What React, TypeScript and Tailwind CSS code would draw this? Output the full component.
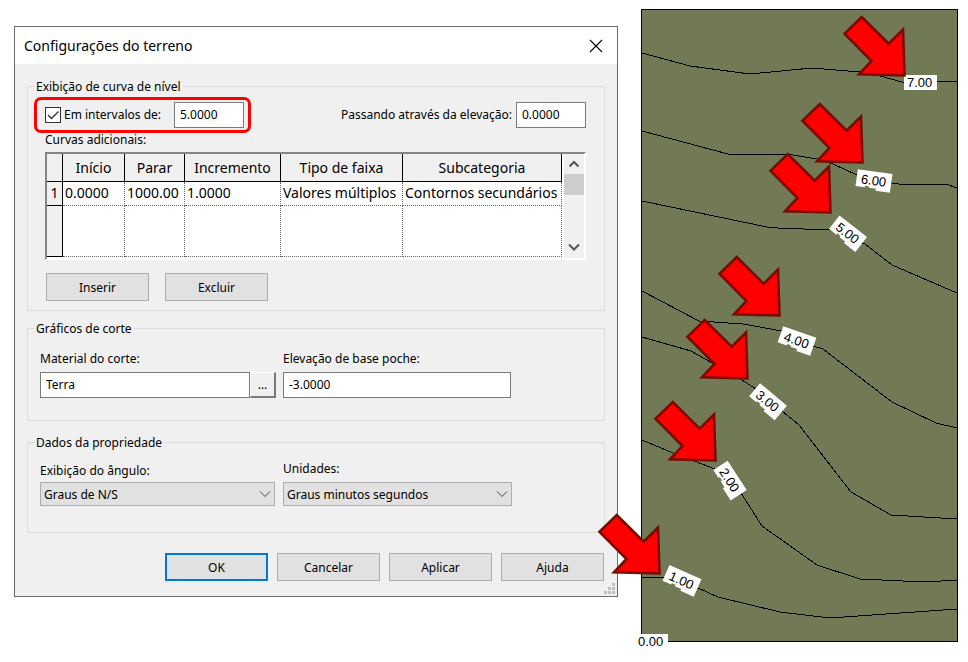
import type { ReactNode } from "react";

type LabelSpec = { text: string; x: number; y: number; angle: number };

const contours = [
  "642,53 690,66 750,74 812,68 860,72 880,76 902,82 937,82 957,81",
  "642,131 728,154 787,154 817,159 833,164 857,175 892,183 899,184 946,184 957,188",
  "642,201 767,227 778,228 830,230 865,244 892,265 957,293",
  "642,291 699,321 743,324 782,331 813,346 823,349 892,402 936,423 957,428",
  "642,337 691,351 712,363 742,380 756,389 782,411 799,425 851,492 891,515 957,519",
  "642,440 673,453 715,469 741,493 762,526 817,565 860,579 925,582 957,580",
  "642,577 665,577 698,588 718,597 780,612 830,618 957,609",
];

const labels: LabelSpec[] = [
  { text: "6.00", x: 874, y: 180, angle: 8 },
  { text: "5.00", x: 848, y: 233, angle: 38 },
  { text: "4.00", x: 797, y: 340, angle: 19 },
  { text: "3.00", x: 768, y: 401, angle: 40 },
  { text: "2.00", x: 730, y: 480, angle: 57 },
  { text: "1.00", x: 682, y: 580, angle: 24 },
];

const arrows = [
  [905, 76],
  [863, 163],
  [831, 213],
  [780, 316],
  [748, 379],
  [716, 461],
  [660, 574],
];

function TerrainMap() {
  return (
    <svg viewBox="641 9 317 634" className="block w-full overflow-visible" role="img" aria-label="Curvas de nível">
      <rect x="641.5" y="9.5" width="316" height="632" fill="#727a55" stroke="#000" shapeRendering="crispEdges" />
      {contours.map((points) => (
        <polyline key={points} points={points} fill="none" stroke="#000" shapeRendering="crispEdges" />
      ))}
      <g fontFamily="'Liberation Sans', Arial, sans-serif" fontSize="13">
        <rect x="904" y="75" width="33" height="15" fill="#fff" />
        <text x="907" y="87">7.00</text>
        <rect x="638" y="634" width="30" height="16" fill="#fff" />
        <text x="638" y="646">0.00</text>
        {labels.map((l) => (
          <g key={l.text} transform={`translate(${l.x} ${l.y}) rotate(${l.angle})`}>
            <path d="M-17.5 -8.5H17.5V10.5H3V8.5H-4V7H-8V8.5H-17.5Z" fill="#fff" />
            <text x="-13" y="5">{l.text}</text>
          </g>
        ))}
      </g>
      {arrows.map(([x, y]) => (
        <path
          key={y}
          transform={`translate(${x} ${y})`}
          d="M-43.3 -59L-16.3 -32.3L-2 -46.5L-0.5 -0.5L-46 -1.7L-33.5 -15L-60.5 -42.3Z"
          fill="#f00"
          stroke="#780c00"
          strokeWidth="2.6"
        />
      ))}
    </svg>
  );
}

function Group({ title, className, children }: { title: string; className: string; children: ReactNode }) {
  return (
    <fieldset className={`min-w-0 border border-[#dcdcdc] ${className}`}>
      <legend className="ml-1.5 px-0.5 pt-0.5 leading-4">{title}</legend>
      {children}
    </fieldset>
  );
}

function PushButton({ children, primary = false }: { children: ReactNode; primary?: boolean }) {
  return (
    <button
      type="button"
      className={`h-7 w-[103px] bg-[#e1e1e1] pt-0.5 text-center ${primary ? "border-2 border-[#0078d7]" : "border border-[#adadad]"}`}
    >
      {children}
    </button>
  );
}

function Chevron({ className, up = false, width = 1 }: { className: string; up?: boolean; width?: number }) {
  return (
    <svg viewBox="0 0 12 8" className={className} fill="none" stroke="currentColor" strokeWidth={width} aria-hidden="true">
      <path d={up ? "M1.5 6.5L6 2L10.5 6.5" : "M1 1.5L6 6.5L11 1.5"} />
    </svg>
  );
}

function Dropdown({ id, value }: { id: string; value: string }) {
  return (
    <div className="relative">
      <select id={id} className="block h-6 w-full appearance-none border border-[#adadad] bg-[#e1e1e1] pt-0.5 pl-[3px]">
        <option>{value}</option>
      </select>
      <Chevron className="pointer-events-none absolute top-2 right-1 h-2 w-3 text-[#444]" />
    </div>
  );
}

const field = "h-[26px] border border-[#7a7a7a] bg-white px-[5px] pb-0.5";
const cell = "border-r border-b border-dotted border-[#666] p-0 pl-0.5 pb-0.5";
const head = "border-r border-b border-black bg-[#f0f0f0] p-0 font-normal";
const rowHead = "border-r border-b border-black bg-[#f0f0f0] p-0 pb-0.5 font-normal";

function CurvesTable() {
  return (
    <div className="flex h-[108px] border-2 border-t-[#848484] border-r-white border-b-white border-l-[#848484] bg-white">
      <div className="min-w-0 flex-1">
        <table className="h-[103px] w-full table-fixed border-separate border-spacing-0 text-left text-[14px] leading-5 whitespace-nowrap">
          <colgroup>
            <col className="w-4" />
            <col className="w-[62px]" />
            <col className="w-[60px]" />
            <col className="w-24" />
            <col className="w-[122px]" />
            <col />
          </colgroup>
          <thead>
            <tr className="h-7 text-center">
              <td className={head}></td>
              <th scope="col" className={head}>Início</th>
              <th scope="col" className={head}>Parar</th>
              <th scope="col" className={head}>Incremento</th>
              <th scope="col" className={head}>Tipo de faixa</th>
              <th scope="col" className={head}>Subcategoria</th>
            </tr>
          </thead>
          <tbody>
            <tr className="h-6">
              <th scope="row" className={`${rowHead} text-center`}>1</th>
              <td className={cell}>0.0000</td>
              <td className={cell}>1000.00</td>
              <td className={cell}>1.0000</td>
              <td className={cell}>Valores múltiplos</td>
              <td className={cell}>Contornos secundários</td>
            </tr>
            <tr>
              <td className={rowHead}></td>
              <td className={cell}></td>
              <td className={cell}></td>
              <td className={cell}></td>
              <td className={cell}></td>
              <td className={cell}></td>
            </tr>
          </tbody>
        </table>
      </div>
      <div className="ml-0.5 flex w-5 flex-col items-center justify-between bg-[#f0f0f0] pt-1.5 pb-[7px] text-[#555]">
        <div className="flex w-full flex-col items-center gap-1.5">
          <Chevron up width={2} className="h-2 w-3" />
          <div className="h-[21px] w-full bg-[#cdcdcd]"></div>
        </div>
        <Chevron width={2} className="h-2 w-3" />
      </div>
    </div>
  );
}

function TerrainDialog() {
  return (
    <section className="mt-[17px] border border-[#6d6d6d] bg-[#f0f0f0] font-['Noto_Sans',sans-serif] text-[12px] leading-4 text-black">
      <header className="flex h-[37px] items-center justify-between bg-white pr-3.5 pl-[9px]">
        <h1 className="text-[14px] leading-5">Configurações do terreno</h1>
        <button type="button" aria-label="Fechar" className="p-0">
          <svg viewBox="0 0 14 14" className="block size-3.5" stroke="#000" strokeWidth="1.1" aria-hidden="true">
            <path d="M1 1L13 13M13 1L1 13" />
          </svg>
        </button>
      </header>

      <form className="px-3 pt-[13px]">
        <Group title="Exibição de curva de nível" className="h-[234px]">
          <div className="mt-0.5 flex items-center justify-between pr-[18px] pl-1.5">
            <div className="flex h-9 w-[217px] items-center justify-between rounded-[7px] border-3 border-[#f00] pr-1 pl-2">
              <label className="flex items-center gap-[3px]">
                <span className="grid">
                  <input
                    type="checkbox"
                    defaultChecked
                    className="peer col-start-1 row-start-1 size-4 appearance-none border border-[#333] bg-white"
                  />
                  <svg
                    viewBox="0 0 16 16"
                    className="pointer-events-none col-start-1 row-start-1 hidden size-4 peer-checked:block"
                    fill="none"
                    stroke="#333"
                    strokeWidth="1.4"
                    aria-hidden="true"
                  >
                    <path d="M3 8L6.5 11.5L13.5 4.5" />
                  </svg>
                </span>
                Em intervalos de:
              </label>
              <input aria-label="Intervalo" defaultValue="5.0000" className={`w-[70px] ${field}`} />
            </div>
            <div className="flex items-center gap-1">
              <label htmlFor="elevation">Passando através da elevação:</label>
              <input id="elevation" defaultValue="0.0000" className={`w-[70px] ${field}`} />
            </div>
          </div>
          <div className="pr-[18px] pl-[17px]">
            <p className="mb-[5px] leading-[14px]">Curvas adicionais:</p>
            <CurvesTable />
            <div className="mt-[13px] ml-px flex gap-4">
              <PushButton>Inserir</PushButton>
              <PushButton>Excluir</PushButton>
            </div>
          </div>
        </Group>

        <Group title="Gráficos de corte" className="mt-2 h-[102px]">
          <div className="mt-3.5 flex gap-[7px] pl-3">
            <div className="w-[236px]">
              <label htmlFor="material" className="mb-[5px] block">Material do corte:</label>
              <div className="flex">
                <input id="material" defaultValue="Terra" className={`min-w-0 flex-1 ${field}`} />
                <button
                  type="button"
                  className="h-[26px] w-[26px] border-t border-r-2 border-b-2 border-l border-t-white border-r-[#7a7a7a] border-b-[#7a7a7a] border-l-white bg-[#f0f0f0]"
                >
                  ...
                </button>
              </div>
            </div>
            <div className="w-[228px]">
              <label htmlFor="base" className="mb-[5px] block">Elevação de base poche:</label>
              <input id="base" defaultValue="-3.0000" className={`w-full ${field}`} />
            </div>
          </div>
        </Group>

        <Group title="Dados da propriedade" className="mt-3 h-[100px]">
          <div className="mt-2.5 flex items-end gap-2 pl-3">
            <div className="w-[235px]">
              <label htmlFor="angle" className="mb-[3px] block">Exibição do ângulo:</label>
              <Dropdown id="angle" value="Graus de N/S" />
            </div>
            <div className="w-[229px]">
              <label htmlFor="units" className="mb-[5px] block">Unidades:</label>
              <Dropdown id="units" value="Graus minutos segundos" />
            </div>
          </div>
        </Group>

        <div className="mt-5 flex justify-end gap-[9px] pr-px">
          <PushButton primary>OK</PushButton>
          <PushButton>Cancelar</PushButton>
          <PushButton>Aplicar</PushButton>
          <PushButton>Ajuda</PushButton>
        </div>
      </form>

      <div className="flex h-[15px] items-end justify-end pr-0.5 pb-0.5">
        <svg viewBox="0 0 11 11" className="size-[11px]" fill="#bfbfbf" aria-hidden="true">
          <path d="M8 0h3v3h-3zM4 4h3v3h-3zM8 4h3v3h-3zM0 8h3v3h-3zM4 8h3v3h-3zM8 8h3v3h-3z" />
        </svg>
      </div>
    </section>
  );
}

export default function App() {
  return (
    <main className="grid min-h-screen grid-cols-[604fr_317fr] items-start gap-[23px] bg-white pt-[9px] pr-2.5 pl-3.5">
      <TerrainDialog />
      <TerrainMap />
    </main>
  );
}
